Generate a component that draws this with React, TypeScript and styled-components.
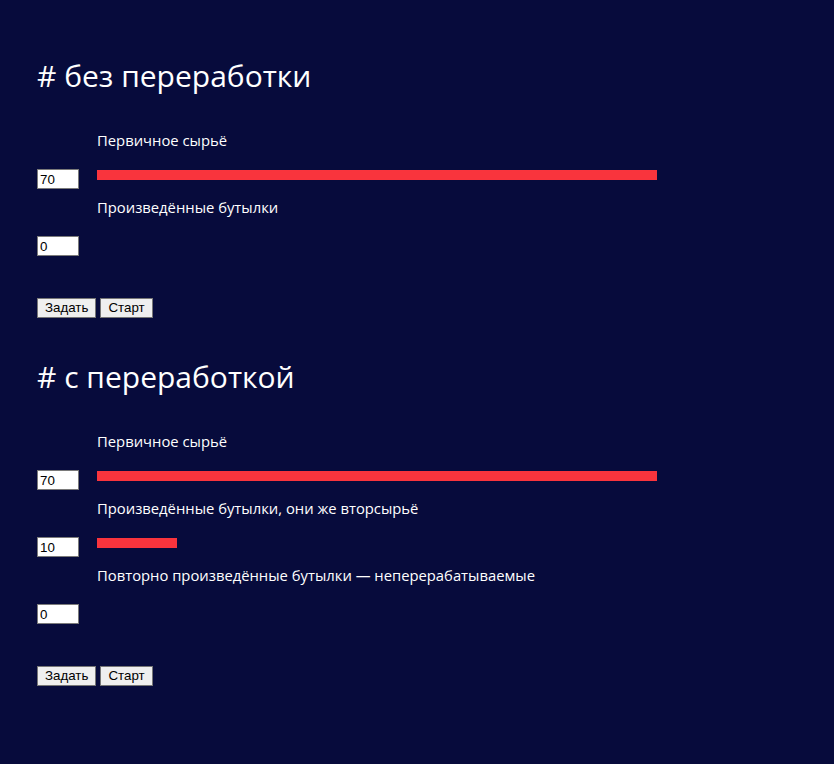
import styled, { createGlobalStyle } from 'styled-components';

const GlobalStyle = createGlobalStyle`
  html, body {
    margin: 0;
    padding: 0;
    background-color: #070b3c;
  }
`

const Page = styled.div`
  min-height: 764px;
  box-sizing: border-box;
  padding: 56px 37px 0;
  display: flex;
  flex-direction: column;
  background-color: #070b3c;
  color: #ffffff;
  font-family: "Open Sans", "Noto Sans", sans-serif;
`

const Section = styled.section`
  display: flex;
  flex-direction: column;
  margin-bottom: 39px;
`

const Heading = styled.h1`
  margin: 0 0 34px;
  font-size: 30px;
  font-weight: 400;
  line-height: 40px;
  color: #ffffff;
`

const Field = styled.div`
  display: flex;
  flex-direction: column;
  margin-bottom: 8px;
`

const FieldLabel = styled.div`
  padding-left: 60px;
  font-size: 14.8px;
  line-height: 20px;
  margin-bottom: 19px;
`

const FieldRow = styled.div`
  display: flex;
  align-items: flex-start;
  gap: 18px;
  height: 20px;
`

const NumberInput = styled.input`
  box-sizing: border-box;
  width: 42px;
  height: 20px;
  margin: 0;
  padding: 0 2px;
  border: 1px solid #7a7a7a;
  background: #ffffff;
  color: #000000;
  font-family: "Liberation Sans", Arial, sans-serif;
  font-size: 13.33px;
`

const Bar = styled.div<{ $width: number }>`
  margin-top: 1px;
  height: 10px;
  width: ${(props) => props.$width}px;
  background-color: #f9343d;
`

const Buttons = styled.div`
  display: flex;
  gap: 4px;
  margin-top: 34px;
`

const Button = styled.button`
  box-sizing: border-box;
  height: 20px;
  margin: 0;
  padding: 0 7px;
  border: 1px solid #767676;
  background-color: #efefef;
  color: #000000;
  font-family: "Liberation Sans", Arial, sans-serif;
  font-size: 13.33px;
  line-height: 18px;
`

type Item = { label: string; value: number };

const sections: { title: string; items: Item[] }[] = [
  {
    title: '# без переработки',
    items: [
      { label: 'Первичное сырьё', value: 70 },
      { label: 'Произведённые бутылки', value: 0 },
    ],
  },
  {
    title: '# с переработкой',
    items: [
      { label: 'Первичное сырьё', value: 70 },
      { label: 'Произведённые бутылки, они же вторсырьё', value: 10 },
      { label: 'Повторно произведённые бутылки — неперерабатываемые', value: 0 },
    ],
  },
];

export default function App() {
  return (
    <Page>
      <GlobalStyle />
      {sections.map((section) => (
        <Section key={section.title}>
          <Heading>{section.title}</Heading>
          {section.items.map((item) => (
            <Field key={item.label}>
              <FieldLabel>{item.label}</FieldLabel>
              <FieldRow>
                <NumberInput type="text" defaultValue={item.value} />
                {item.value > 0 && <Bar $width={item.value * 8} />}
              </FieldRow>
            </Field>
          ))}
          <Buttons>
            <Button>Задать</Button>
            <Button>Старт</Button>
          </Buttons>
        </Section>
      ))}
    </Page>
  );
}
